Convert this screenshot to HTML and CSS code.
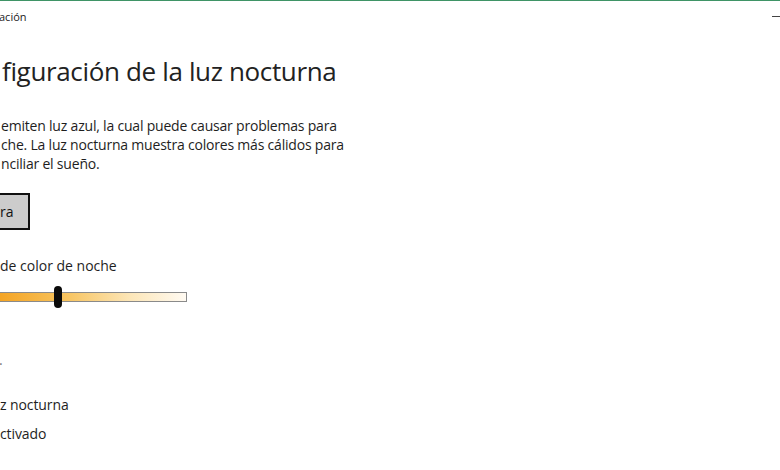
FILE: index.html
```html
<!DOCTYPE html>
<html lang="es">
<head>
  <meta charset="UTF-8" />
  <title>Configuración de la luz nocturna</title>
  <link rel="stylesheet" href="styles.css">
</head>
<body>
  <div class="titlebar">
    <span class="app-name">ación</span>
    <span class="minimize"></span>
  </div>

  <div class="page">
    <h1>figuración de la luz nocturna</h1>

    <p class="desc">
      emiten luz azul, la cual puede causar problemas para<br>
      che. La luz nocturna muestra colores más cálidos para<br>
      nciliar el sueño.
    </p>

    <button class="btn">ra</button>

    <div class="label">de color de noche</div>
    <div class="slider">
      <div class="track"></div>
      <div class="thumb"></div>
    </div>

    <div class="cut">.</div>
    <div class="row">z nocturna</div>
    <div class="row small-gap">ctivado</div>
  </div>
</body>
</html>
```

FILE: styles.css
```css
body {
  margin: 0;
  background: #fff;
  font-family: 'Open Sans', 'Noto Sans', sans-serif;
  color: #1e1e1e;
  overflow: hidden;
}

.titlebar {
  height: 31px;
  border-top: 1px solid #3f9466;
  display: flex;
  align-items: center;
  justify-content: space-between;
  font-size: 11px;
  color: #222;
}

.app-name {
  margin-left: -1px;
}

.minimize {
  width: 8px;
  height: 1px;
  background: #444;
  margin-top: -1px;
}

h1 {
  font-size: 26px;
  font-weight: 400;
  letter-spacing: -0.35px;
  line-height: 40px;
  margin: 19px 0 0 2px;
  color: #222;
}

.desc {
  font-size: 14px;
  letter-spacing: -0.2px;
  line-height: 19px;
  margin: 25px 0 0 1px;
}

.btn {
  display: block;
  margin-top: 20px;
  margin-left: -10px;
  width: 40px;
  height: 37px;
  padding: 0 0 0 8px;
  text-align: left;
  background: #cccccc;
  border: 2px solid #111;
  font-family: inherit;
  font-size: 14px;
  color: #111;
}

.label {
  font-size: 14px;
  line-height: 20px;
  margin-top: 26px;
}

.slider {
  position: relative;
  margin-top: 10px;
  width: 187px;
  height: 22px;
  display: flex;
  align-items: center;
}

.track {
  width: 100%;
  height: 10px;
  box-sizing: border-box;
  border: 1px solid #8a8a8a;
  border-left: none;
  background: linear-gradient(to right, #f4a424 0%, #f7c35e 35%, #fce6b8 70%, #fffaf2 100%);
}

.thumb {
  position: absolute;
  left: 54px;
  top: 0;
  width: 8px;
  height: 22px;
  border-radius: 4px;
  background: #0a0a0a;
}

.cut {
  font-size: 14px;
  line-height: 20px;
  margin-top: 42px;
  margin-left: -1px;
  color: #777;
}

.row {
  font-size: 14px;
  letter-spacing: -0.1px;
  line-height: 20px;
  margin-top: 25px;
}

.row.small-gap {
  margin-top: 9px;
}
```
